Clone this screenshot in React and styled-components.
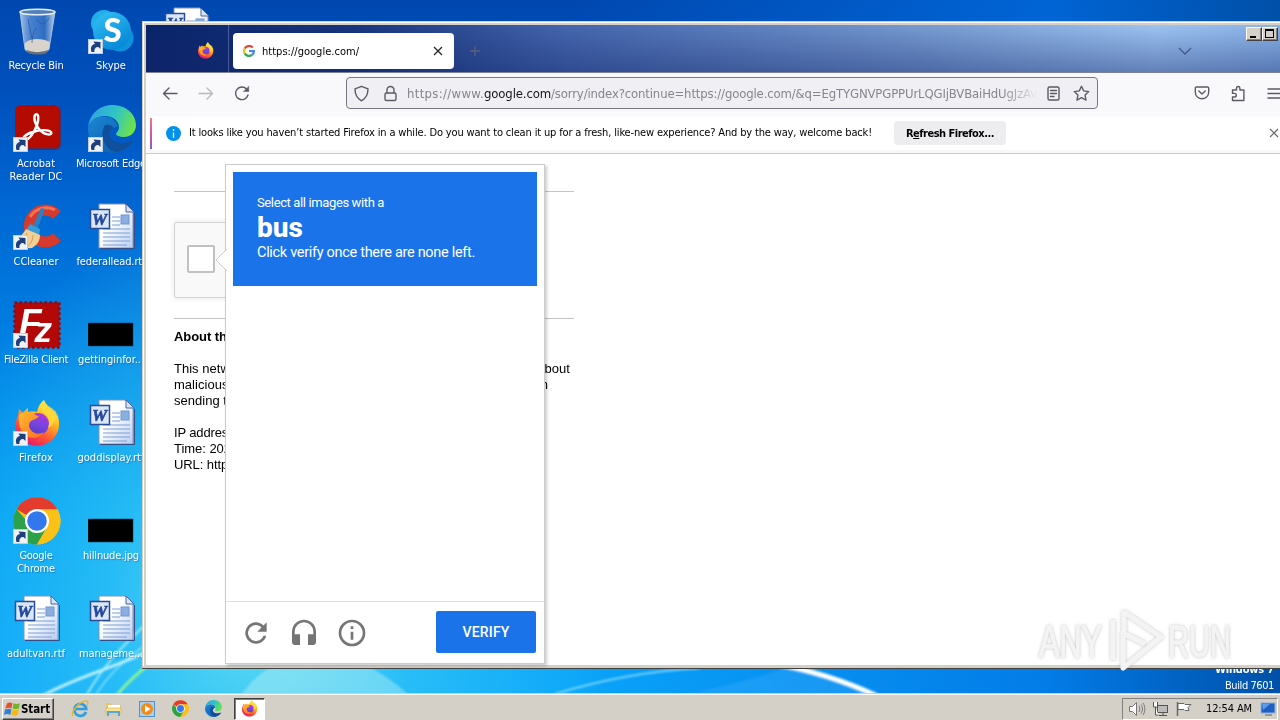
import React, { useLayoutEffect, useRef, useState } from "react";
import styled, { createGlobalStyle, css } from "styled-components";

const ui = `"DejaVu Sans Condensed", "DejaVu Sans", sans-serif`;

const Global = createGlobalStyle`
  * { box-sizing: border-box; }
  body { margin: 0; overflow: hidden; font-family: ${ui}; font-size: 11px; color: #000; }
`;

/* ---------- text that is tracked to a known width ---------- */
const FitSpan = styled.span`
  display: inline-block;
  white-space: pre;
`;
function Fit({ w, children, className }) {
  const ref = useRef(null);
  const [track, setTrack] = useState(0);
  useLayoutEffect(() => {
    const natural = ref.current.getBoundingClientRect().width;
    setTrack((w - natural) / ref.current.textContent.length);
  }, [w]);
  return (
    <FitSpan ref={ref} className={className} style={{ letterSpacing: `${track}px` }}>
      {children}
    </FitSpan>
  );
}

/* ---------- desktop ---------- */
const Desktop = styled.div`
  position: relative;
  width: 1280px;
  height: 720px;
  overflow: hidden;
  display: flex;
  flex-direction: column;
  background:
    radial-gradient(ellipse 350px 400px at 265px 600px, rgba(120, 235, 240, 0.85), rgba(70, 215, 245, 0.5) 45%, transparent),
    linear-gradient(90deg, transparent 45%, rgba(0, 110, 225, 0.75) 82%, #0050a8 100%),
    linear-gradient(180deg, #0048b0 0, #0050bc 90px, #0068d4 210px, #0088e8 380px, #009cf4 500px, #0aa4fa 692px);
`;
const Wallpaper = styled.svg`
  position: absolute;
  inset: 0;
`;
const Icons = styled.div`
  position: relative;
  flex: 1;
  display: grid;
  grid-template-columns: repeat(3, 72px);
  grid-template-rows: repeat(7, 98px);
  grid-auto-flow: column;
  column-gap: 3px;
  padding-top: 7px;
`;
const IconCell = styled.div`
  display: flex;
  flex-direction: column;
  align-items: center;
  gap: 4px;
`;
const IconBox = styled.div`
  position: relative;
  width: 48px;
  height: 48px;
  left: 1px;
  > svg { display: block; }
`;
const Shortcut = styled.svg`
  position: absolute;
  left: 0;
  top: 32px;
`;
const Label = styled.div`
  display: flex;
  flex-direction: column;
  align-items: center;
  color: #fff;
  line-height: 13px;
  text-shadow: 1px 1px 1px rgba(0, 40, 110, 0.35);
`;
const BuildInfo = styled.div`
  position: absolute;
  right: 6px;
  top: 662px;
  text-align: right;
  color: #fff;
  line-height: 16px;
`;

/* ---------- browser window ---------- */
const Window = styled.section`
  position: absolute;
  left: 142px;
  top: 21px;
  width: 1160px;
  height: 647px;
  display: flex;
  flex-direction: column;
  background: #fff;
  border: 4px solid #d4d0c8;
  border-bottom-width: 3px;
  box-shadow: 0 1px 0 #404040;
  &::before {
    content: "";
    position: absolute;
    left: -3px;
    top: -3px;
    right: 0;
    bottom: -1px;
    border-left: 1px solid #fff;
    border-top: 1px solid #fff;
    pointer-events: none;
  }
`;
const TitleBar = styled.header`
  height: 48px;
  flex: none;
  display: flex;
  align-items: flex-start;
  background:
    linear-gradient(180deg, transparent, rgba(18, 36, 105, 0.42)),
    linear-gradient(90deg, #0a246a 0, #16357c 210px, #4566ad 420px, #7498cf 760px, #9dc4f2 1010px, #8ab3e8 1134px);
  border-bottom: 1px solid #7b8296;
`;
const PinnedTab = styled.div`
  width: 83px;
  height: 48px;
  display: flex;
  align-items: center;
  padding: 3px 0 0 51px;
  border-right: 1px solid rgba(150, 170, 215, 0.4);
`;
const Tab = styled.div`
  margin: 8px 0 0 4px;
  width: 221px;
  height: 36px;
  padding: 0 10px;
  display: flex;
  align-items: center;
  gap: 7px;
  background: #fff;
  border-radius: 4px;
  svg:last-child { margin-left: auto; }
`;
const TitleGlyph = styled.svg`
  margin: ${(p) => p.$m};
`;
const WinButtons = styled.div`
  display: flex;
  margin: 2px 0 0 54px;
`;
const WinButton = styled.div`
  width: 16px;
  height: 14px;
  background: #d4d0c8;
  border: 1px solid;
  border-color: #fff #404040 #404040 #fff;
  box-shadow: inset -1px -1px 0 #808080;
  svg { display: block; }
`;
const Toolbar = styled.div`
  height: 43px;
  flex: none;
  display: flex;
  align-items: center;
  padding: 0 0 3px 16px;
  background: #f9f9fb;
`;
const NavIcon = styled.svg`
  flex: none;
  margin-right: ${(p) => p.$gap}px;
`;
const UrlBar = styled.div`
  width: 752px;
  height: 32px;
  flex: none;
  display: flex;
  align-items: center;
  padding: 0 6px;
  margin-right: 96px;
  border: 1px solid #77777f;
  border-radius: 4px;
  background: #f0f0f4;
`;
const UrlText = styled.div`
  width: 631px;
  overflow: hidden;
  display: flex;
  white-space: nowrap;
  font-size: 13px;
  line-height: 20px;
  color: #85858d;
  margin: 0 7px 0 8px;
  padding-top: 1px;
  mask-image: linear-gradient(90deg, #000 595px, transparent 631px);
  b { font-weight: 400; color: #15141a; }
`;
const Notice = styled.div`
  height: 38px;
  flex: none;
  display: flex;
  align-items: center;
  padding: 0 0 4px 4px;
  background: #fff;
  border-top: 1px solid #fbfbfd;
  border-bottom: 1px solid #ccccd0;
  box-shadow: inset 0 -3px 0 #f8f8fa;
`;
const Accent = styled.div`
  width: 2px;
  height: 31px;
  background: linear-gradient(180deg, #f77a84, #d355a6 45%, #9059c8);
  margin-right: 14px;
`;
const NoticeText = styled.p`
  margin: 0 22px 0 8px;
  width: 683px;
  line-height: 14px;
`;
const RefreshButton = styled.div`
  width: 112px;
  height: 24px;
  display: grid;
  place-items: center;
  background: #ededf0;
  border-radius: 4px;
  font-weight: 700;
  margin-right: 263px;
  u { text-underline-offset: 1px; }
`;
const Page = styled.main`
  flex: 1;
  padding: 37px 0 0 28px;
  font: 13px/16px "Liberation Sans", Arial, sans-serif;
`;
const Column = styled.div`
  width: 400px;
  p { margin: 0 0 16px; }
`;
const Heading = styled.div`
  margin: 10px 0 16px;
  font-weight: 700;
`;
const Rule = styled.div`
  height: 1px;
  background: #c4c4c4;
`;
const Captcha = styled.div`
  width: 304px;
  height: 76px;
  margin: 30px 0 20px;
  padding: 22px 12px;
  background: #f9f9f9;
  border: 1px solid #d3d3d3;
  border-radius: 3px;
  box-shadow: 0 0 4px 1px rgba(0, 0, 0, 0.08);
`;
const CheckBox = styled.div`
  width: 28px;
  height: 28px;
  border: 2px solid #c1c1c1;
  border-radius: 2px;
  background: #fff;
`;

/* ---------- challenge popup ---------- */
const Popup = styled.aside`
  position: absolute;
  left: 225px;
  top: 164px;
  width: 320px;
  height: 500px;
  display: flex;
  flex-direction: column;
  background: #fff;
  border: 1px solid #ccc;
  box-shadow: 2px 2px 3px rgba(0, 0, 0, 0.2);
  font-family: Roboto, sans-serif;
`;
const Pointer = styled.svg`
  position: absolute;
  left: -11px;
  top: 84px;
`;
const Prompt = styled.div`
  margin: 7px;
  height: 114px;
  padding: 22px 24px 0;
  background: #1a73e8;
  color: #fff;
  display: flex;
  flex-direction: column;
  align-items: flex-start;
`;
const PromptLine = styled.div`
  font-size: ${(p) => p.$size}px;
  line-height: ${(p) => p.$lh}px;
  font-weight: ${(p) => p.$weight || 400};
`;
const PopupFooter = styled.div`
  margin-top: auto;
  height: 62px;
  border-top: 1px solid #dfdfdf;
  display: flex;
  align-items: center;
  gap: 16px;
  padding: 0 8px 0 14px;
  svg { fill: #757575; }
`;
const Verify = styled.div`
  margin: 0 0 2px auto;
  width: 100px;
  height: 42px;
  display: grid;
  place-items: center;
  background: #1a73e8;
  border-radius: 2px;
  color: #fff;
  font-size: 14px;
  font-weight: 500;
`;

/* ---------- taskbar ---------- */
const Taskbar = styled.footer`
  position: relative;
  height: 28px;
  flex: none;
  display: flex;
  align-items: center;
  padding: 2px 2px 0;
  background: #d4d0c8;
  border-top: 1px solid #d4d0c8;
  box-shadow: inset 0 1px 0 #fff;
`;
const sunken = css`
  border: 1px solid;
  border-color: #808080 #fff #fff #808080;
`;
const Start = styled.div`
  width: 52px;
  height: 22px;
  display: flex;
  align-items: center;
  padding-left: 1px;
  font-weight: 700;
  font-size: 11.5px;
  border: 1px solid;
  border-color: #fff #404040 #404040 #fff;
  box-shadow: inset -1px -1px 0 #808080;
`;
const QuickLaunch = styled.div`
  display: flex;
  gap: 16px;
  margin: 0 12px 0 17px;
`;
const TaskItem = styled.div`
  width: 31px;
  height: 22px;
  display: grid;
  place-items: center;
  background: #fff;
  border: 1px solid;
  border-color: #404040 #fff #fff #404040;
  box-shadow: inset 1px 1px 0 #808080;
`;
const Tray = styled.div`
  margin-left: auto;
  width: 156px;
  height: 22px;
  display: flex;
  align-items: center;
  padding-left: 5px;
  gap: 6px;
  ${sunken}
  svg:last-child { margin-left: auto; }
`;
const Clock = styled.div`
  margin-left: 7px;
`;
const Watermark = styled.svg`
  position: absolute;
  left: 1030px;
  top: 600px;
`;

/* ---------- drawings ---------- */
const FirefoxLogo = ({ s }) => (
  <svg width={s} height={s} viewBox="0 0 48 48">
    <defs>
      <linearGradient id="ffa" x1=".8" y1=".1" x2=".3" y2="1">
        <stop offset="0" stopColor="#fff44f" /><stop offset=".35" stopColor="#ffb01f" />
        <stop offset=".65" stopColor="#ff5a36" /><stop offset="1" stopColor="#e6126a" />
      </linearGradient>
      <linearGradient id="ffb" x1=".7" y1="0" x2=".3" y2="1">
        <stop offset="0" stopColor="#b833e1" /><stop offset=".5" stopColor="#7545e0" /><stop offset="1" stopColor="#5b3bc4" />
      </linearGradient>
      <linearGradient id="ffc" x1="0" y1="0" x2="1" y2="1">
        <stop offset="0" stopColor="#ffbd2e" /><stop offset="1" stopColor="#ff6a20" />
      </linearGradient>
    </defs>
    <path fill="url(#ffa)" d="M31 1c1 4 4 7 7 10 3 1 4 3 5 6 1-1 0-3 0-4 5 9 4 20-3 27-8 9-24 9-32 0-6-6-7-16-3-23l1-7 4 4c1-2 3-4 5-5v4c3-1 6-1 9 0 1-5 3-9 7-12z" />
    <circle cx="25" cy="25" r="11" fill="url(#ffb)" />
    <path fill="url(#ffc)" d="M6 16l3-2c4-2 8-1 11 0 2 2 4 3 6 3-1 2-4 3-6 4-3 1-4 3-4 6 1 6 8 10 15 6-3 6-13 8-19 3-5-4-7-12-6-20z" />
    <path fill="#ffd93a" opacity=".85" d="M31 1c-4 5-3 10 1 14 4 3 5 8 3 14 6-3 9-9 8-16-3-4-10-6-12-12z" />
  </svg>
);
const ChromeLogo = ({ s }) => (
  <svg width={s} height={s} viewBox="0 0 48 48">
    <circle cx="24" cy="24" r="23.500" fill="#fbc116" />
    <path d="M24 24 3.600 12.200A23.500 23.500 0 0 1 44.400 12.200z" fill="#e33b2e" />
    <path d="M3.600 12.200A23.500 23.500 0 0 0 24 47.500L34.200 29.900 14 24z" fill="#2da04a" />
    <path d="M44.400 12.300H24V24l10.200 6L24 47.500A23.500 23.500 0 0 0 44.400 12.300z" fill="#fbc116" />
    <circle cx="24" cy="24" r="12" fill="#fff" />
    <circle cx="24" cy="24" r="9.800" fill="#3377ee" />
  </svg>
);
const EdgeLogo = ({ s }) => (
  <svg width={s} height={s} viewBox="0 0 48 48">
    <defs>
      <linearGradient id="eda" x1="0" y1=".2" x2="1" y2=".5">
        <stop offset="0" stopColor="#2f9fe4" /><stop offset=".55" stopColor="#2fc5c3" /><stop offset="1" stopColor="#6de24a" />
      </linearGradient>
      <linearGradient id="edb" x1="0" y1="0" x2="1" y2="1">
        <stop offset="0" stopColor="#1b86d6" /><stop offset="1" stopColor="#0c59a4" />
      </linearGradient>
    </defs>
    <path fill="url(#edb)" d="M0 24c1-9 9-13 17-12 8 0 12 5 13 10-6 0-9 4-8 9 2 7 12 9 21 5l2 1C40 45 32 48 24 48 10 47 0 37 0 24z" />
    <path fill="#0f4f9c" d="M17 20c-6 10-1 24 11 27 7-1 13-5 17-10 0-1-1-1-2-1-9 4-19 2-21-5-1-4 1-7 4-8-2-3-6-4-9-3z" />
    <path fill="url(#eda)" d="M0 23C1 9 12 0 24 0c15 0 24 10 24 20 0 8-6 12-12 12-5 0-8-2-8-3s3-3 3-7c0-6-6-11-14-11C8 11 1 16 0 23z" />
  </svg>
);
const SkypeIcon = () => (
  <svg width="48" height="48" viewBox="0 0 48 48">
    <defs><linearGradient id="sk" x1="0" y1="0" x2=".6" y2="1"><stop offset="0" stopColor="#35c3f5" /><stop offset="1" stopColor="#0788d8" /></linearGradient></defs>
    <circle cx="16" cy="16" r="13" fill="#22aee9" /><circle cx="32" cy="31" r="13.500" fill="#0b93dc" />
    <circle cx="24" cy="24" r="19" fill="url(#sk)" />
    <text x="24.500" y="35" textAnchor="middle" fill="#fff" fontFamily="Lato, sans-serif" fontWeight="900" fontSize="33">S</text>
  </svg>
);
const BinIcon = () => (
  <svg width="48" height="48" viewBox="0 0 48 48">
    <defs><linearGradient id="bn"><stop offset="0" stopColor="#c8dcf2" stopOpacity=".8" /><stop offset=".3" stopColor="#5f93d8" stopOpacity=".75" /><stop offset=".7" stopColor="#3f78c6" stopOpacity=".75" /><stop offset="1" stopColor="#dbe8f5" stopOpacity=".85" /></linearGradient></defs>
    <path d="M7 5l5 37c0 5 24 5 24 0l6-37z" fill="url(#bn)" stroke="#a8c1dd" />
    <path d="M12 36c5-5 17-5 25-1l-1 7c-3 4-21 4-24 0z" fill="#d9d3cc" /><path d="M14 43c6 3 15 3 21 0l-1 3c-5 2-14 2-19 0z" fill="#6b6f76" />
    <ellipse cx="24.500" cy="5" rx="17.500" ry="2.800" fill="#5380b8" stroke="#e4edf6" strokeWidth="1.500" />
    <path d="M15 12l4 20M24 12c4 8 8 5 12-1M23 21c-3 5-4 10-4 15" stroke="#244f8e" strokeOpacity=".6" fill="none" />
  </svg>
);
const AcrobatIcon = () => (
  <svg width="48" height="48" viewBox="0 0 48 48">
    <rect x="4" y="1" width="44" height="44" rx="6" fill="#7a1020" opacity=".6" /><rect x="2" y="0" width="45" height="43" rx="6" fill="#b30b00" />
    <path d="M12 35c-4-1 0-6 8-8 6-2 15-3 18 0 2 4-7 3-11-2-4-4-7-11-5-15 4-3 4 4 2 10-3 8-8 15-12 15z" fill="none" stroke="#fff" strokeWidth="2.400" />
  </svg>
);
const CCleanerIcon = () => (
  <svg width="48" height="48" viewBox="0 0 48 48">
    <path d="M44 12A16 16 0 1 0 44 34" fill="none" stroke="#d63a2c" strokeWidth="11" /><path d="M42 7A19 19 0 0 0 17 14" fill="none" stroke="#f07355" strokeWidth="3" />
    <path d="M28 5l4 1-8 21-5-2z" fill="#2c7fc0" /><path d="M17 21l10 5-1 7-13-6z" fill="#3b9bd8" />
    <path d="M13 26l14 6c0 6-3 10-8 13-6 1-13-3-17-9 5-2 8-5 11-10z" fill="#f2cf94" /><path d="M14 30c-1 5-4 8-8 10M20 32c0 6-3 9-6 12" stroke="#cda061" fill="none" />
  </svg>
);
const FileZillaIcon = () => (
  <svg width="48" height="48" viewBox="0 0 48 48">
    <rect x="1.500" y="1.500" width="45" height="45" fill="#b30808" stroke="#8a0b12" strokeWidth="2.500" strokeDasharray="2.500 2.500" />
    <text x="6" y="34" fill="#fff" fontFamily="Liberation Sans, sans-serif" fontWeight="700" fontStyle="italic" fontSize="37">F<tspan dx="-7" dy="7" fontSize="35">z</tspan></text>
  </svg>
);
const WordIcon = () => (
  <svg width="48" height="48" viewBox="0 0 48 48">
    <defs><linearGradient id="wd" x1="0" y1="0" x2="1" y2="1"><stop offset=".4" stopColor="#fff" /><stop offset="1" stopColor="#b9cdf0" /></linearGradient></defs>
    <path d="M11 1h26l8 8v36H11z" fill="url(#wd)" stroke="#8094bd" /><path d="M38 1v8h8z" fill="#d6e2f5" stroke="#4a67a4" />
    <path d="M46.500 10v35.500H12" stroke="#344f85" fill="none" />
    <path d="M24 14h8M24 18h8M24 22h8M15 26h27M15 30h27M15 34h27M15 38h27M15 42h24" stroke="#7da0d6" />
    <rect x="33" y="12" width="8" height="9" fill="#8aaee0" stroke="#7396cc" />
    <rect x="2.500" y="6.500" width="19" height="19" fill="#dbe6f9" stroke="#274d9c" strokeWidth="1.500" />
    <text x="11.500" y="22" textAnchor="middle" fill="#23489c" stroke="#23489c" strokeWidth=".6" fontFamily="Liberation Serif, serif" fontWeight="700" fontStyle="italic" fontSize="17">W</text>
  </svg>
);
const ThumbIcon = () => (
  <svg width="48" height="48"><rect x="0" y="22" width="45" height="23" fill="#000" stroke="#0b3a55" strokeWidth=".5" /></svg>
);
const WindowsFlag = () => (
  <svg width="17" height="17" viewBox="0 0 16 16">
    <path d="M3 3c2-1 3-1 5 0L7 8C5 7 3 7 1 8z" fill="#e8502a" /><path d="M9 3c2 1 4 1 6 0l-1 5c-2 1-4 1-6 0z" fill="#72b52c" />
    <path d="M1 9c2-1 4-1 6 0l-1 5c-2-1-4-1-6 0z" fill="#2f7fd8" /><path d="M8 9c2 1 4 1 6 0l-1 5c-2 1-4 1-6 0z" fill="#f4b918" />
  </svg>
);
const IeLogo = () => (
  <svg width="18" height="18" viewBox="0 0 18 18">
    <path d="M15 12A6 6 0 1 1 15.300 9H5" fill="none" stroke="#2f9fe0" strokeWidth="2.700" />
    <path d="M2 16C-1 12 9 1 15 1c3 0 2 3 1 5" fill="none" stroke="#eab52c" strokeWidth="1.300" />
  </svg>
);
const FolderLogo = () => (
  <svg width="17" height="18" viewBox="0 0 17 18">
    <path d="M1 3h5l1 2h9v9H1z" fill="#e8c564" /><path d="M3 5h12v4H3z" fill="#fff" /><path d="M1 8h15v6H1z" fill="#f8e394" stroke="#d3ac4b" strokeWidth=".6" />
    <path d="M3 16v-4h11v4" fill="none" stroke="#58a6d8" strokeWidth="2" />
  </svg>
);
const MediaLogo = () => (
  <svg width="18" height="18" viewBox="0 0 18 18">
    <rect x="1.500" y="1.500" width="15" height="15" fill="#a9d0f2" stroke="#4c93d3" /><circle cx="9" cy="9" r="6" fill="#f28a16" /><path d="M7 5.500v7l5.500-3.500z" fill="#fff" />
  </svg>
);
const ShortcutArrow = () => (
  <Shortcut width="15" height="15" viewBox="0 0 15 15">
    <rect x=".5" y=".5" width="14" height="14" fill="#eef2f7" stroke="#c4ccd8" />
    <path d="M3.500 13C2 8 4 5.500 7 5L5.500 2.500 12.500 3v7L10.300 8C7.500 8 6 10 6.500 13z" fill="#1e3f7d" />
  </Shortcut>
);

const desktopItems = [
  [BinIcon, false, ["Recycle Bin", 55]],
  [AcrobatIcon, true, ["Acrobat", 38], ["Reader DC", 53]],
  [CCleanerIcon, true, ["CCleaner", 45]],
  [FileZillaIcon, true, ["FileZilla Client", 64]],
  [() => <FirefoxLogo s={48} />, true, ["Firefox", 34]],
  [() => <ChromeLogo s={48} />, true, ["Google", 33], ["Chrome", 38]],
  [WordIcon, false, ["adultvan.rtf", 58]],
  [SkypeIcon, true, ["Skype", 30]],
  [() => <EdgeLogo s={48} />, true, ["Microsoft Edge", 70]],
  [WordIcon, false, ["federallead.rtf", 69]],
  [ThumbIcon, false, ["gettinginfor...", 66]],
  [WordIcon, false, ["goddisplay.rtf", 67]],
  [ThumbIcon, false, ["hillnude.jpg", 56]],
  [WordIcon, false, ["manageme...", 64]],
  [WordIcon, false],
];

const stroke = { fill: "none", stroke: "#5b5b66", strokeWidth: 1.4, strokeLinecap: "round", strokeLinejoin: "round" };

function Browser() {
  return (
    <Window>
      <TitleBar>
        <PinnedTab><FirefoxLogo s={17} /></PinnedTab>
        <Tab>
          <svg width="12" height="12" viewBox="0 0 12 12" fill="none" strokeWidth="2.200">
            <path d="M9.800 2.600A5 5 0 0 0 1.700 3.600" stroke="#ea4335" /><path d="M1.700 3.600a5 5 0 0 0 0 4.800" stroke="#fbbc05" />
            <path d="M1.700 8.400a5 5 0 0 0 7.400 1.500" stroke="#34a853" /><path d="M9.100 9.900A4.900 4.900 0 0 0 10.900 6H6" stroke="#4285f4" />
          </svg>
          <Fit w={97}>https://google.com/</Fit>
          <svg width="12" height="12" viewBox="0 0 12 12"><path d="M2 2l8 8M10 2l-8 8" stroke="#222" strokeWidth="1.200" /></svg>
        </Tab>
        <TitleGlyph $m="20px 0 0 15px" width="12" height="12"><path d="M6 1v10M1 6h10" stroke="#5a607c" strokeWidth="1.300" /></TitleGlyph>
        <TitleGlyph $m="20px 0 0 697px" width="14" height="12"><path d="M1 3l6 6 6-6" fill="none" stroke="#3f5a85" strokeWidth="1.300" /></TitleGlyph>
        <WinButtons>
          <WinButton><svg width="14" height="12"><rect x="3" y="8" width="6" height="2" /></svg></WinButton>
          <WinButton><svg width="14" height="12"><path d="M2 1h9v9H2z M3 3v6h7V3z" fillRule="evenodd" /></svg></WinButton>
        </WinButtons>
      </TitleBar>
      <Toolbar>
        <NavIcon $gap={20} width="16" height="16" {...stroke}><path d="M15 8.500H1.500M7 3L1.500 8.500 7 14" /></NavIcon>
        <NavIcon $gap={20} width="16" height="16" {...stroke} stroke="#b9b9c0"><path d="M1 8.500h13.500M9 3l5.500 5.500L9 14" /></NavIcon>
        <NavIcon $gap={96} width="16" height="16" {...stroke}><path d="M14 10A6.300 6.300 0 1 1 12.500 4L14 5.500" /><path d="M14.700 1.500v5h-5z" fill="#5b5b66" strokeWidth=".5" /></NavIcon>
        <UrlBar>
          <NavIcon $gap={12} width="17" height="17" {...stroke}><path d="M8.500 1.300L15 3.800c0 5-1 9.200-6.500 12C3 13 2 8.800 2 3.800z" /></NavIcon>
          <NavIcon $gap={0} width="17" height="17" {...stroke}><rect x="3" y="8" width="11" height="7.500" rx="1.500" /><path d="M5 8V5a3.500 3.500 0 0 1 7 0v3" /></NavIcon>
          <UrlText>
            <Fit w={77}>https://www.</Fit>
            <b><Fit w={67}>google.com</Fit></b>
            <Fit w={486}>/sorry/index?continue=https://google.com/&amp;q=EgTYGNVPGPPUrLQGIjBVBaiHdUgJzAv</Fit>
          </UrlText>
          <NavIcon $gap={11} width="17" height="17" {...stroke}><rect x="3" y="2" width="11" height="13" rx="1.500" /><path d="M5.500 5.500h6M5.500 8.500h6M5.500 11.500h3.500" /></NavIcon>
          <NavIcon $gap={0} width="17" height="17" {...stroke}><path d="M8.500 1.300l2.200 4.600 5 .7-3.600 3.500.9 5-4.500-2.400L4 15.100l.9-5L1.300 6.600l5-.7z" /></NavIcon>
        </UrlBar>
        <NavIcon $gap={20} width="16" height="16" {...stroke}><path d="M2.500 2h11c.7 0 1.200.5 1.200 1.200V7c0 9-13.400 9-13.400 0V3.200C1.300 2.500 1.800 2 2.500 2zM4.800 6L8 9l3.200-3" /></NavIcon>
        <NavIcon $gap={21} width="16" height="17" {...stroke}><path d="M2.500 15.500v-3.500h2a1.800 1.800 0 0 0 0-3.600h-2V5h4V3.200a1.700 1.700 0 0 1 3.400 0V5h4v10.500z" /></NavIcon>
        <NavIcon $gap={0} width="16" height="16" {...stroke}><path d="M1 4h14M1 8.500h14M1 13h14" /></NavIcon>
      </Toolbar>
      <Notice>
        <Accent />
        <svg width="15" height="15"><circle cx="7.500" cy="7.500" r="7.500" fill="#0090ed" /><path d="M7.500 3v2M7.500 6.500v5.500" stroke="#d5efff" strokeWidth="1.400" /></svg>
        <NoticeText><Fit w={683}>It looks like you haven’t started Firefox in a while. Do you want to clean it up for a fresh, like-new experience? And by the way, welcome back!</Fit></NoticeText>
        <RefreshButton><Fit w={88}>R<u>e</u>fresh Firefox...</Fit></RefreshButton>
        <svg width="10" height="10"><path d="M1 1l8 8M9 1L1 9" stroke="#65656e" strokeWidth="1.100" /></svg>
      </Notice>
      <Page>
        <Column>
          <Rule />
          <Captcha><CheckBox /></Captcha>
          <Rule />
          <Heading><Fit w={97}>About this page</Fit></Heading>
          <p>
            <Fit w={396}>This network is blocked due to unaddressed abuse complaints about</Fit>
            <Fit w={374}>malicious behavior. This page checks to see if it's really a human</Fit>
            <Fit w={372}>sending the requests, and not a robot, coming from this network.</Fit>
          </p>
          <p>
            <Fit w={64}>IP address:</Fit><br />
            <Fit w={57}>Time: 202</Fit><br />
            <Fit w={64}>URL: https:</Fit>
          </p>
        </Column>
      </Page>
    </Window>
  );
}

function Challenge() {
  return (
    <Popup>
      <Pointer width="12" height="22"><path d="M12 0L1 11l11 11" fill="#fff" stroke="#ccc" /></Pointer>
      <Prompt>
        <PromptLine $size={13} $lh={18}><Fit w={127}>Select all images with a</Fit></PromptLine>
        <PromptLine $size={28} $lh={31} $weight={800}><Fit w={46}>bus</Fit></PromptLine>
        <PromptLine $size={14.5} $lh={20}><Fit w={218}>Click verify once there are none left.</Fit></PromptLine>
      </Prompt>
      <PopupFooter>
        <svg width="32" height="32" viewBox="0 0 24 24"><path d="M17.650 6.350A8 8 0 1 0 19.730 14h-2.080A6 6 0 1 1 12 6c1.660 0 3.140.69 4.220 1.780L13 11h7V4z" /></svg>
        <svg width="32" height="32" viewBox="0 0 24 24"><path d="M12 2a9 9 0 0 0-9 9v8c0 1 .8 2 2 2h4v-8H5v-2a7 7 0 0 1 14 0v2h-4v8h4c1.200 0 2-1 2-2v-8a9 9 0 0 0-9-9z" /></svg>
        <svg width="32" height="32" viewBox="0 0 24 24"><path d="M11 17h2v-6h-2v6zm1-15a10 10 0 1 0 0 20 10 10 0 0 0 0-20zm0 18a8 8 0 1 1 0-16 8 8 0 0 1 0 16zM11 9h2V7h-2v2z" /></svg>
        <Verify><Fit w={47}>VERIFY</Fit></Verify>
      </PopupFooter>
    </Popup>
  );
}

export default function App() {
  return (
    <Desktop>
      <Global />
      <Wallpaper width="1280" height="720" fill="none">
        <defs><filter id="soft"><feGaussianBlur stdDeviation="1.200" /></filter></defs>
        <g filter="url(#soft)">
          <path d="M42 696C80 675 115 668 150 650" stroke="#d6fbff" strokeWidth="3" opacity=".85" />
          <path d="M86 696C110 655 130 640 150 620" stroke="#b8f4ff" strokeWidth="2" opacity=".8" />
          <path d="M95 696C110 672 130 655 150 642" stroke="#b8f4ff" strokeWidth="1.500" opacity=".6" />
          <path d="M116 696C126 684 136 674 150 664" stroke="#8cf29a" strokeWidth="3" />
          <path d="M240 696C280 640 350 640 410 696z" fill="#c5f5f4" opacity=".4" />
          <path d="M555 694C600 680 650 671 700 668" stroke="#8fe0ff" strokeWidth="2" opacity=".8" />
          <path d="M690 694C730 684 765 676 790 666l90 30z" fill="#4fb6ff" opacity=".25" />
          <path d="M775 664C815 671 845 681 877 696" stroke="#fff" strokeWidth="5" />
        </g>
      </Wallpaper>
      <Icons>
        {desktopItems.map(([Drawing, linked, ...lines], i) => (
          <IconCell key={i}>
            <IconBox><Drawing />{linked && <ShortcutArrow />}</IconBox>
            <Label>{lines.map(([text, w]) => <Fit key={text} w={w}>{text}</Fit>)}</Label>
          </IconCell>
        ))}
      </Icons>
      <BuildInfo><b><Fit w={59}>Windows 7</Fit></b><br /><Fit w={49}>Build 7601</Fit></BuildInfo>
      <Browser />
      <Challenge />
      <Watermark width="215" height="80" viewBox="0 0 215 80">
        <defs><filter id="glow" x="-10%" y="-20%" width="120%" height="140%"><feDropShadow dx="0" dy="0" stdDeviation="1.800" floodColor="#777" floodOpacity=".5" /></filter></defs>
        <g filter="url(#glow)" fill="#f4f4f4" stroke="#f4f4f4" fontFamily="Liberation Sans, sans-serif" fontSize="45">
          <text x="9" y="57" textLength="63" lengthAdjust="spacingAndGlyphs">ANY</text>
          <text x="138" y="57" textLength="63" lengthAdjust="spacingAndGlyphs">RUN</text>
          <path d="M83 60V20M94 12l37 25-38 31V33l22 11" fill="none" strokeWidth="5" strokeLinejoin="round" />
          <path d="M94 11v22" fill="none" strokeWidth="5" />
        </g>
      </Watermark>
      <Taskbar>
        <Start><WindowsFlag /><Fit w={29}>Start</Fit></Start>
        <QuickLaunch><IeLogo /><FolderLogo /><MediaLogo /><ChromeLogo s={17} /><EdgeLogo s={17} /></QuickLaunch>
        <TaskItem><FirefoxLogo s={17} /></TaskItem>
        <Tray>
          <svg width="18" height="16" viewBox="0 0 18 16" fill="#fff" stroke="#777"><path d="M1.500 5.500h3l4-4v13l-4-4h-3z" /><path d="M11 5c1 2 1 4 0 6M13 3.500c2 3 2 6 0 9M15 2c2.500 4 2.500 8 0 12" fill="none" /></svg>
          <svg width="17" height="16" viewBox="0 0 17 16" fill="#fff" stroke="#555"><rect x="5.500" y="4.500" width="10" height="7" fill="#bbb" /><path d="M7 14.500h8M11 12v2M1.500 1v5h4V1M3.500 6v8h3" /></svg>
          <svg width="18" height="16" viewBox="0 0 18 16" fill="#fff" stroke="#666"><path d="M2.500 1v14" strokeWidth="1.500" /><path d="M3 2.500h6l1 1h6l-3 3 1 3h-4l-1-1H3z" /></svg>
          <Clock><Fit w={46}>12:54 AM</Fit></Clock>
          <svg width="17" height="14" viewBox="0 0 17 14"><rect x="1" y="1" width="14" height="10" fill="#1f5fc4" stroke="#8fb4dd" /><path d="M2 2h8L3 8z" fill="#5d9be8" /><path d="M5 13h7" stroke="#567" /></svg>
        </Tray>
      </Taskbar>
    </Desktop>
  );
}
